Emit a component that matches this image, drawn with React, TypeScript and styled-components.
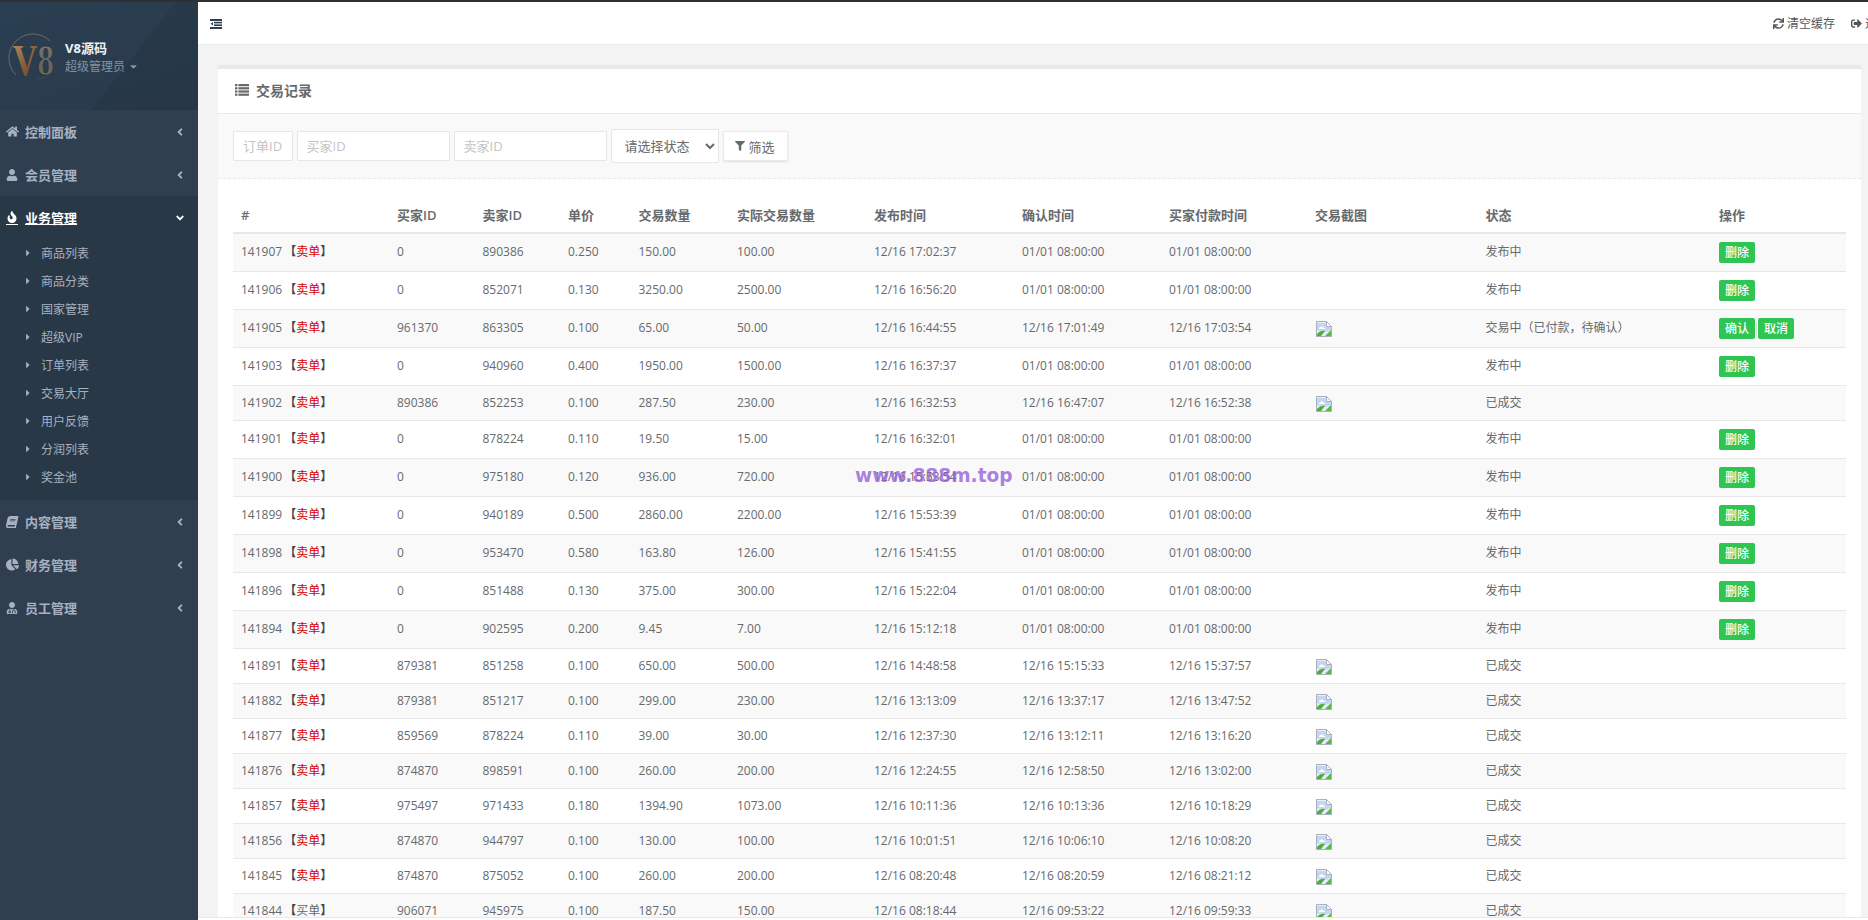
import React from "react";
import styled, { createGlobalStyle } from "styled-components";
import {
  FaHome, FaUser, FaFire, FaBook, FaChartPie, FaUserMd, FaAngleLeft, FaAngleDown,
  FaCaretRight, FaCaretDown, FaFilter, FaSync, FaSignOutAlt,
} from "react-icons/fa";

const FONT = `"Open Sans", "Noto Sans CJK SC", sans-serif`;

const Global = createGlobalStyle`
  html, body { margin: 0; padding: 0; height: 100%; overflow: hidden; }
  body { font-family: ${FONT}; font-size: 12px; color: #676a6c; background: #f3f3f4; }
  #root { height: 100%; }
  * { box-sizing: border-box; }
`;

const Shell = styled.div`
  position: relative;
  display: grid;
  grid-template-columns: 198px 1fr;
  width: 1868px;
  height: 920px;
  overflow: hidden;
  border-top: 2px solid #2f3032;
`;

const Sidebar = styled.nav`
  background: #2f3f50;
  display: flex;
  flex-direction: column;
  height: 918px;
`;

const Profile = styled.div`
  height: 108px;
  display: flex;
  align-items: center;
  gap: 5px;
  padding: 3px 0 0 6px;
  background:
    linear-gradient(128deg, rgba(255,255,255,0) 62%, rgba(0,0,0,0.07) 62.3%),
    linear-gradient(160deg, #2b3f52 0%, #2a3c4e 55%, #293a4b 100%);
`;

const ProfileText = styled.div`
  display: flex;
  flex-direction: column;
  gap: 1px;
`;

const ProfileName = styled.strong`
  color: #ecf1f6;
  font-size: 13px;
  line-height: 17px;
  font-weight: 700;
`;

const ProfileRole = styled.span`
  display: flex;
  align-items: center;
  gap: 3px;
  color: #8095a8;
  font-size: 12px;
  line-height: 17px;
`;

const MenuItem = styled.div<{ $active?: boolean }>`
  height: 43px;
  display: flex;
  align-items: center;
  padding: 0 12px 0 6px;
  gap: 7px;
  font-size: 13px;
  font-weight: 600;
  color: ${(p) => (p.$active ? "#ffffff" : "#a7b1c2")};
  background: ${(p) => (p.$active ? "#293846" : "transparent")};
  svg { flex: none; }
`;

const MenuIcon = styled.span<{ $skew?: boolean; $underline?: boolean }>`
  width: 12px;
  display: flex;
  justify-content: center;
  transform: ${(p) => (p.$skew ? "skewX(-12deg)" : "none")};
  padding-bottom: ${(p) => (p.$underline ? "1px" : "0")};
  border-bottom: ${(p) => (p.$underline ? "1px solid #fff" : "none")};
`;

const MenuLabel = styled.span<{ $underline?: boolean }>`
  flex: 1;
  text-decoration: ${(p) => (p.$underline ? "underline" : "none")};
  text-underline-offset: 1px;
`;

const SubMenu = styled.div`
  background: #293846;
  padding: 0 0 9px 0;
`;

const SubItem = styled.div`
  height: 28px;
  display: flex;
  align-items: center;
  gap: 8px;
  padding-left: 23px;
  color: #a7b1c2;
  font-size: 12px;
`;

const Main = styled.main`
  display: flex;
  flex-direction: column;
  min-width: 0;
  overflow: hidden;
`;

const TopBar = styled.header`
  flex: none;
  height: 43px;
  background: #fff;
  border-bottom: 1px solid #e7eaec;
  display: flex;
  align-items: center;
  padding-left: 12px;
  color: #2f4050;
`;

const TopActions = styled.div`
  margin-left: auto;
  margin-right: -21px;
  flex: none;
  display: flex;
  align-items: center;
  gap: 16px;
  font-size: 12px;
  color: #555;
`;

const TopAction = styled.span`
  display: flex;
  align-items: center;
  gap: 3px;
`;

const Content = styled.div`
  flex: 1;
  min-height: 0;
  padding: 20px 7px 0 20px;
`;

const Panel = styled.section`
  background: #fff;
  border-top: 4px solid #e7eaec;
`;

const PanelTitle = styled.div`
  height: 45px;
  display: flex;
  align-items: center;
  gap: 7px;
  padding: 0 0 2px 17px;
  font-size: 14px;
  font-weight: 600;
  color: #676a6c;
  border-bottom: 1px solid #e7eaec;
`;

const FilterBar = styled.form`
  height: 65px;
  background: #f9f9f9;
  border-bottom: 1px dashed #e7eaec;
  display: flex;
  align-items: center;
  gap: 4px;
  padding: 0 15px;
`;

const TextField = styled.input<{ $w: number }>`
  width: ${(p) => p.$w}px;
  height: 30px;
  border: 1px solid #e5e6e7;
  border-radius: 1px;
  background: #fff;
  padding: 0 9px;
  font: 13px ${FONT};
  outline: none;
  &::placeholder { color: #c4c4c4; }
`;

const StatusSelect = styled.select`
  width: 108px;
  height: 34px;
  border: 1px solid #e5e6e7;
  border-radius: 2px;
  background-color: #fff;
  padding: 0 9px;
  font: 13px ${FONT};
  color: #676a6c;
  outline: none;
`;

const FilterButton = styled.button`
  width: 65px;
  height: 30px;
  border: 1px solid #e7eaec;
  border-radius: 2px;
  background: #fff;
  box-shadow: 0 1px 2px rgba(0, 0, 0, 0.1);
  display: flex;
  align-items: center;
  justify-content: center;
  gap: 3px;
  font: 13px ${FONT};
  color: #676a6c;
  padding: 0;
`;

const TableWrap = styled.div`
  padding: 19px 15px 0;
`;

const Table = styled.table`
  width: 1613px;
  table-layout: fixed;
  border-collapse: separate;
  border-spacing: 0;
  font-size: 12px;
  line-height: 18px;
`;

const Th = styled.th`
  text-align: left;
  padding: 8px;
  height: 36px;
  font-size: 13px;
  font-weight: 600;
  color: #676a6c;
  border-bottom: 2px solid #e7e7e7;
`;

const Row = styled.tr<{ $odd: boolean; $tall: boolean }>`
  background: ${(p) => (p.$odd ? "#f9f9f9" : "#ffffff")};
  & > td {
    padding: ${(p) => (p.$tall ? "7px 8px 9px" : "8px")};
  }
`;

const Td = styled.td`
  color: #676a6c;
  border-bottom: 1px solid #e7e7e7;
  white-space: nowrap;
`;

const OrderType = styled.span<{ $sell: boolean }>`
  margin-left: -1px;
  color: #444;
  font-weight: 700;
  b {
    font-weight: 400;
    color: ${(p) => (p.$sell ? "#d40000" : "#676a6c")};
  }
`;

const Actions = styled.div`
  display: flex;
  align-items: center;
  height: 21px;
  margin: 1px 0 -1px;
`;

const ActionButton = styled.button`
  width: 36px;
  height: 21px;
  border: none;
  border-radius: 2px;
  background: #2ec553;
  color: #fff;
  font: 500 12px/21px ${FONT};
  padding: 0;
`;

const Divider = styled.span`
  width: 1px;
  height: 14px;
  margin: 0 1px;
  background: #d8d8d8;
`;

const BrokenImage = styled.svg`
  display: block;
  margin: 2px 0 0 1px;
  width: 16px;
  height: 16px;
`;

const Watermark = styled.div`
  position: absolute;
  left: 855px;
  top: 461px;
  font: 700 18.6px/26px "DejaVu Sans", sans-serif;
  color: rgba(150, 95, 215, 0.8);
  pointer-events: none;
`;

const FooterEdge = styled.div`
  position: absolute;
  left: 198px;
  right: 0;
  bottom: 0;
  height: 3px;
  background: #fff;
  border-top: 1px solid #e7eaec;
`;

const Logo = () => (
  <svg width="54" height="48" viewBox="0 0 54 48" style={{ flex: "none", overflow: "visible" }}>
    <defs>
      <linearGradient id="lgV" x1="0" y1="0" x2="1" y2="1">
        <stop offset="0" stopColor="#b3936a" />
        <stop offset="0.5" stopColor="#85552f" />
        <stop offset="1" stopColor="#553f2e" />
      </linearGradient>
      <linearGradient id="lg8" x1="0" y1="0" x2="0" y2="1">
        <stop offset="0" stopColor="#93806a" />
        <stop offset="0.5" stopColor="#62666a" />
        <stop offset="1" stopColor="#75634f" />
      </linearGradient>
    </defs>
    <path d="M44 7 A22 22 0 1 0 10 41" fill="none" stroke="#6b6a62" strokeWidth="1" />
    <path d="M46 38 A22 22 0 0 1 30 45" fill="none" stroke="#3f4c58" strokeWidth="1" />
    <text x="7" y="41" textLength="41" lengthAdjust="spacingAndGlyphs" fontFamily="'Liberation Serif', serif" fontWeight="700" fontSize="44">
      <tspan fill="url(#lgV)">V</tspan>
      <tspan fill="url(#lg8)" stroke="#22262b" strokeWidth="0.6">8</tspan>
    </text>
  </svg>
);

const OutdentIcon = () => (
  <svg width="12" height="10" viewBox="0 0 12 10" fill="currentColor" style={{ flex: "none", marginTop: 1 }}>
    <rect x="0" y="0" width="12" height="2" />
    <rect x="4" y="2.8" width="8" height="1.6" />
    <rect x="4" y="5.4" width="8" height="1.6" />
    <rect x="0" y="8" width="12" height="2" />
    <path d="M3 3v3.6L0.6 4.8Z" />
  </svg>
);

const ListIcon = () => (
  <svg width="14" height="12" viewBox="0 0 14 12" fill="#676a6c" style={{ flex: "none" }}>
    {[0, 3.2, 6.4, 9.6].map((y) => (
      <React.Fragment key={y}>
        <rect x="0" y={y} width="2.4" height="2.2" />
        <rect x="3.4" y={y} width="10.6" height="2.2" />
      </React.Fragment>
    ))}
  </svg>
);

const Broken = () => (
  <BrokenImage viewBox="0 0 16 16">
    <path d="M0.5 0.5H10.5L15.5 5.5V15.5H0.5Z" fill="#e8eef9" stroke="#a9b0bb" strokeWidth="1" />
    <path d="M10.5 0.5V5.5H15.5Z" fill="#fff" stroke="#a9b0bb" strokeWidth="1" />
    <path d="M1 2H10V6H15V9L9 11L1 9Z" fill="#c5d6f3" />
    <path d="M3 7c1-1 3-2 4-1s1 1 2 1v1H3Z" fill="#fff" />
    <path d="M1 15V13C3 10 7 9 9 10L5 15Z" fill="#4caf3c" />
    <path d="M9 15L15 9V15Z" fill="#58b848" />
  </BrokenImage>
);

const primary = [
  { icon: <FaHome size={13} />, label: "控制面板" },
  { icon: <FaUser size={12} />, label: "会员管理" },
];
const subs = ["商品列表", "商品分类", "国家管理", "超级VIP", "订单列表", "交易大厅", "用户反馈", "分润列表", "奖金池"];
const secondary = [
  { icon: <FaBook size={12} />, label: "内容管理", skew: true },
  { icon: <FaChartPie size={13} />, label: "财务管理" },
  { icon: <FaUserMd size={12} />, label: "员工管理" },
];

const columns: [string, number][] = [
  ["#", 156], ["买家ID", 85.5], ["卖家ID", 85.5], ["单价", 70.5], ["交易数量", 98.5],
  ["实际交易数量", 137], ["发布时间", 148], ["确认时间", 147], ["买家付款时间", 146],
  ["交易截图", 170.5], ["状态", 233.5], ["操作", 135],
];

type Rec = [string, string, string, string, string, string, string, string, string, boolean, string, string[]];
const Z = "01/01 08:00:00";
const PUB = "发布中";
const DONE = "已成交";
const D = ["删除"];
const d = (t: string) => `12/16 ${t}`;
const rows: Rec[] = [
  ["141907", "0", "890386", "0.250", "150.00", "100.00", d("17:02:37"), Z, Z, false, PUB, D],
  ["141906", "0", "852071", "0.130", "3250.00", "2500.00", d("16:56:20"), Z, Z, false, PUB, D],
  ["141905", "961370", "863305", "0.100", "65.00", "50.00", d("16:44:55"), d("17:01:49"), d("17:03:54"), true, "交易中（已付款，待确认）", ["确认", "取消"]],
  ["141903", "0", "940960", "0.400", "1950.00", "1500.00", d("16:37:37"), Z, Z, false, PUB, D],
  ["141902", "890386", "852253", "0.100", "287.50", "230.00", d("16:32:53"), d("16:47:07"), d("16:52:38"), true, DONE, []],
  ["141901", "0", "878224", "0.110", "19.50", "15.00", d("16:32:01"), Z, Z, false, PUB, D],
  ["141900", "0", "975180", "0.120", "936.00", "720.00", d("15:53:54"), Z, Z, false, PUB, D],
  ["141899", "0", "940189", "0.500", "2860.00", "2200.00", d("15:53:39"), Z, Z, false, PUB, D],
  ["141898", "0", "953470", "0.580", "163.80", "126.00", d("15:41:55"), Z, Z, false, PUB, D],
  ["141896", "0", "851488", "0.130", "375.00", "300.00", d("15:22:04"), Z, Z, false, PUB, D],
  ["141894", "0", "902595", "0.200", "9.45", "7.00", d("15:12:18"), Z, Z, false, PUB, D],
  ["141891", "879381", "851258", "0.100", "650.00", "500.00", d("14:48:58"), d("15:15:33"), d("15:37:57"), true, DONE, []],
  ["141882", "879381", "851217", "0.100", "299.00", "230.00", d("13:13:09"), d("13:37:17"), d("13:47:52"), true, DONE, []],
  ["141877", "859569", "878224", "0.110", "39.00", "30.00", d("12:37:30"), d("13:12:11"), d("13:16:20"), true, DONE, []],
  ["141876", "874870", "898591", "0.100", "260.00", "200.00", d("12:24:55"), d("12:58:50"), d("13:02:00"), true, DONE, []],
  ["141857", "975497", "971433", "0.180", "1394.90", "1073.00", d("10:11:36"), d("10:13:36"), d("10:18:29"), true, DONE, []],
  ["141856", "874870", "944797", "0.100", "130.00", "100.00", d("10:01:51"), d("10:06:10"), d("10:08:20"), true, DONE, []],
  ["141845", "874870", "875052", "0.100", "260.00", "200.00", d("08:20:48"), d("08:20:59"), d("08:21:12"), true, DONE, []],
  ["141844", "906071", "945975", "0.100", "187.50", "150.00", d("08:18:44"), d("09:53:22"), d("09:59:33"), true, DONE, []],
];

export default function App() {
  return (
    <>
      <Global />
      <Shell>
        <Sidebar>
          <Profile>
            <Logo />
            <ProfileText>
              <ProfileName>V8源码</ProfileName>
              <ProfileRole>超级管理员 <FaCaretDown size={11} /></ProfileRole>
            </ProfileText>
          </Profile>
          {primary.map((m) => (
            <MenuItem key={m.label}>
              <MenuIcon>{m.icon}</MenuIcon>
              <MenuLabel>{m.label}</MenuLabel>
              <FaAngleLeft size={12} />
            </MenuItem>
          ))}
          <MenuItem $active>
            <MenuIcon $underline><FaFire size={12} /></MenuIcon>
            <MenuLabel $underline>业务管理</MenuLabel>
            <FaAngleDown size={12} />
          </MenuItem>
          <SubMenu>
            {subs.map((s) => (
              <SubItem key={s}><FaCaretRight size={10} />{s}</SubItem>
            ))}
          </SubMenu>
          {secondary.map((m) => (
            <MenuItem key={m.label}>
              <MenuIcon $skew={m.skew}>{m.icon}</MenuIcon>
              <MenuLabel>{m.label}</MenuLabel>
              <FaAngleLeft size={12} />
            </MenuItem>
          ))}
        </Sidebar>
        <Main>
          <TopBar>
            <OutdentIcon />
            <TopActions>
              <TopAction><FaSync size={11} />清空缓存</TopAction>
              <TopAction><FaSignOutAlt size={11} />退出</TopAction>
            </TopActions>
          </TopBar>
          <Content>
            <Panel>
              <PanelTitle><ListIcon />交易记录</PanelTitle>
              <FilterBar>
                <TextField $w={59.5} placeholder="订单ID" />
                <TextField $w={153} placeholder="买家ID" />
                <TextField $w={153} placeholder="卖家ID" />
                <StatusSelect defaultValue="">
                  <option value="">请选择状态</option>
                </StatusSelect>
                <FilterButton type="button"><FaFilter size={10} />筛选</FilterButton>
              </FilterBar>
              <TableWrap>
                <Table>
                  <colgroup>
                    {columns.map(([n, w]) => <col key={n} style={{ width: w }} />)}
                  </colgroup>
                  <thead>
                    <tr>{columns.map(([n]) => <Th key={n}>{n}</Th>)}</tr>
                  </thead>
                  <tbody>
                    {rows.map((r, i) => {
                      const sell = r[0] !== "141844";
                      return (
                        <Row key={r[0]} $odd={i % 2 === 0} $tall={r[11].length > 0}>
                          <Td>{r[0]} <OrderType $sell={sell}>【<b>{sell ? "卖单" : "买单"}</b>】</OrderType></Td>
                          <Td>{r[1]}</Td>
                          <Td>{r[2]}</Td>
                          <Td>{r[3]}</Td>
                          <Td>{r[4]}</Td>
                          <Td>{r[5]}</Td>
                          <Td>{r[6]}</Td>
                          <Td>{r[7]}</Td>
                          <Td>{r[8]}</Td>
                          <Td>{r[9] && <Broken />}</Td>
                          <Td>{r[10]}</Td>
                          <Td>
                            {r[11].length > 0 && (
                              <Actions>
                                {r[11].map((a, k) => (
                                  <React.Fragment key={a}>
                                    {k > 0 && <Divider />}
                                    <ActionButton type="button">{a}</ActionButton>
                                  </React.Fragment>
                                ))}
                              </Actions>
                            )}
                          </Td>
                        </Row>
                      );
                    })}
                  </tbody>
                </Table>
              </TableWrap>
            </Panel>
          </Content>
        </Main>
        <Watermark>www.888m.top</Watermark>
        <FooterEdge />
      </Shell>
    </>
  );
}
